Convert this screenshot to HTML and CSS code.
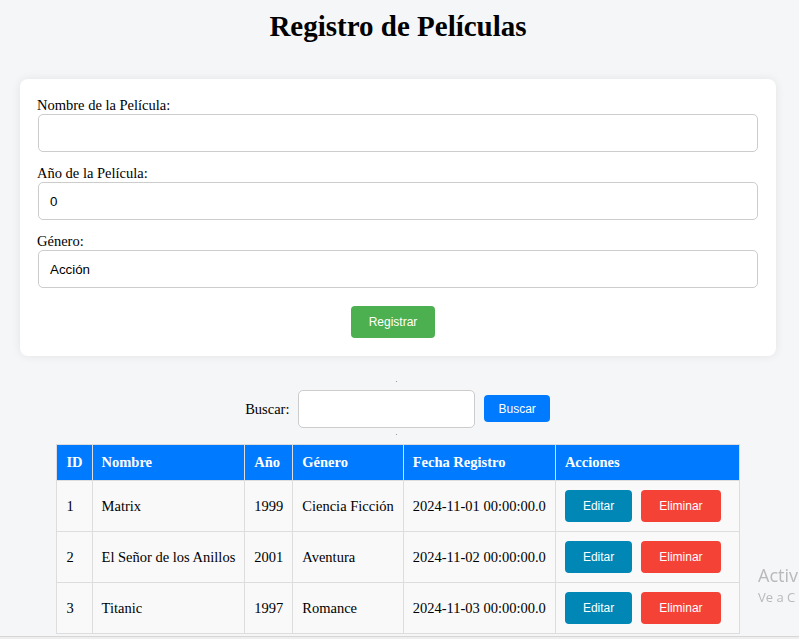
FILE: index.html
```html
<!DOCTYPE html>
<html lang="es">
<head>
<meta charset="utf-8">
<title>Registro de Películas</title>
<link rel="stylesheet" href="styles.css">
</head>
<body>
<h1 class="title">Registro de Películas</h1>

<form class="card">
  <label class="field-label" for="nombre">Nombre de la Película:</label>
  <input class="field" id="nombre" type="text">
  <label class="field-label" for="anio">Año de la Película:</label>
  <input class="field" id="anio" type="text" value="0">
  <label class="field-label" for="genero">Género:</label>
  <div class="field select-field" id="genero">Acción</div>
  <div class="actions">
    <button type="button" class="btn btn-green">Registrar</button>
  </div>
</form>

<div class="dot"></div>
<div class="search">
  <label class="search-label" for="buscar">Buscar:</label>
  <input class="search-input" id="buscar" type="text">
  <button type="button" class="btn btn-blue">Buscar</button>
</div>
<div class="dot dot-bottom"></div>

<table class="movies">
  <thead>
    <tr><th>ID</th><th>Nombre</th><th>Año</th><th>Género</th><th>Fecha Registro</th><th>Acciones</th></tr>
  </thead>
  <tbody>
    <tr><td>1</td><td>Matrix</td><td>1999</td><td>Ciencia Ficción</td><td>2024-11-01 00:00:00.0</td><td class="acts"><button class="btn btn-teal">Editar</button><button class="btn btn-red">Eliminar</button></td></tr>
    <tr><td>2</td><td>El Señor de los Anillos</td><td>2001</td><td>Aventura</td><td>2024-11-02 00:00:00.0</td><td class="acts"><button class="btn btn-teal">Editar</button><button class="btn btn-red">Eliminar</button></td></tr>
    <tr><td>3</td><td>Titanic</td><td>1997</td><td>Romance</td><td>2024-11-03 00:00:00.0</td><td class="acts"><button class="btn btn-teal">Editar</button><button class="btn btn-red">Eliminar</button></td></tr>
  </tbody>
</table>

<div class="watermark">
  <div class="wm-big">Activ</div>
  <div class="wm-small">Ve a C</div>
</div>
<div class="window-edge"></div>
</body>
</html>
```

FILE: styles.css
```css
html, body {
  margin: 0;
  padding: 0;
}
body {
  background: #f5f6f8;
  font-family: "Liberation Serif", "Times New Roman", serif;
  font-size: 14.5px;
  color: #000;
  padding: 0 23px 0 20px;
  overflow: hidden;
  height: 639px;
  box-sizing: border-box;
}
.title {
  margin: 10px 0 36px;
  text-align: center;
  font-size: 29px;
  line-height: 33px;
  font-weight: bold;
}
.card {
  background: #fff;
  border-radius: 8px;
  box-shadow: 0 0 10px rgba(0, 0, 0, 0.08);
  padding: 18px;
  display: flex;
  flex-direction: column;
}
.field-label {
  display: block;
  line-height: 16px;
  margin: 0 0 1px -1px;
}
.field {
  box-sizing: border-box;
  height: 38px;
  width: 100%;
  border: 1px solid #ccc;
  border-radius: 5px;
  padding: 0 11px;
  font-family: "Liberation Sans", Arial, sans-serif;
  font-size: 13.33px;
  margin: 0 0 13px;
  background: #fff;
}
.select-field {
  display: flex;
  align-items: center;
  margin-bottom: 18px;
}
.actions {
  display: flex;
  justify-content: center;
}
.btn {
  border: none;
  border-radius: 4px;
  color: #fff;
  font-family: "Liberation Sans", Arial, sans-serif;
  font-size: 12px;
  line-height: 14px;
  cursor: pointer;
}
.btn-green {
  background: #4caf50;
  padding: 9px 18px;
  margin-right: 10px;
}
.dot {
  width: 1px;
  height: 1px;
  background: #999;
  margin: 25px auto 8px;
  position: relative;
  left: -2px;
}
.dot-bottom {
  margin: 6px auto 9px;
}
.search {
  display: flex;
  align-items: center;
  justify-content: center;
  gap: 9px;
}
.search-label {
  line-height: 16px;
  margin-left: -1px;
}
.search-input {
  box-sizing: border-box;
  width: 177px;
  height: 38px;
  border: 1px solid #ccc;
  border-radius: 5px;
  background: #fff;
}
.btn-blue {
  background: #007bff;
  padding: 7px 14px 6px;
  margin-top: -1px;
}
.movies {
  border-collapse: collapse;
  margin: 0 auto;
}
.movies th,
.movies td {
  border: 1px solid #ddd;
  padding: 0 9px;
  text-align: left;
  white-space: nowrap;
}
.movies th {
  background: #007bff;
  color: #fff;
  font-weight: bold;
  height: 35px;
}
.movies td {
  background: #f9f9f9;
  height: 50px;
}
.movies td.acts {
  padding-right: 18px;
}
.btn-teal {
  background: #0087b6;
  padding: 9px 18px;
  margin-right: 9px;
}
.btn-red {
  background: #f44336;
  padding: 9px 18px;
}
.watermark {
  position: fixed;
  left: 758px;
  top: 563px;
  white-space: nowrap;
  color: #b9b9b9;
  font-family: "Open Sans", "Noto Sans", sans-serif;
}
.wm-big {
  font-size: 18px;
  line-height: 24px;
}
.wm-small {
  font-size: 13px;
  line-height: 20px;
}
.window-edge {
  position: fixed;
  left: 0;
  right: 0;
  top: 636px;
  height: 3px;
  border-top: 1px solid #d6d6d6;
  background: #eeeeee;
}
```
